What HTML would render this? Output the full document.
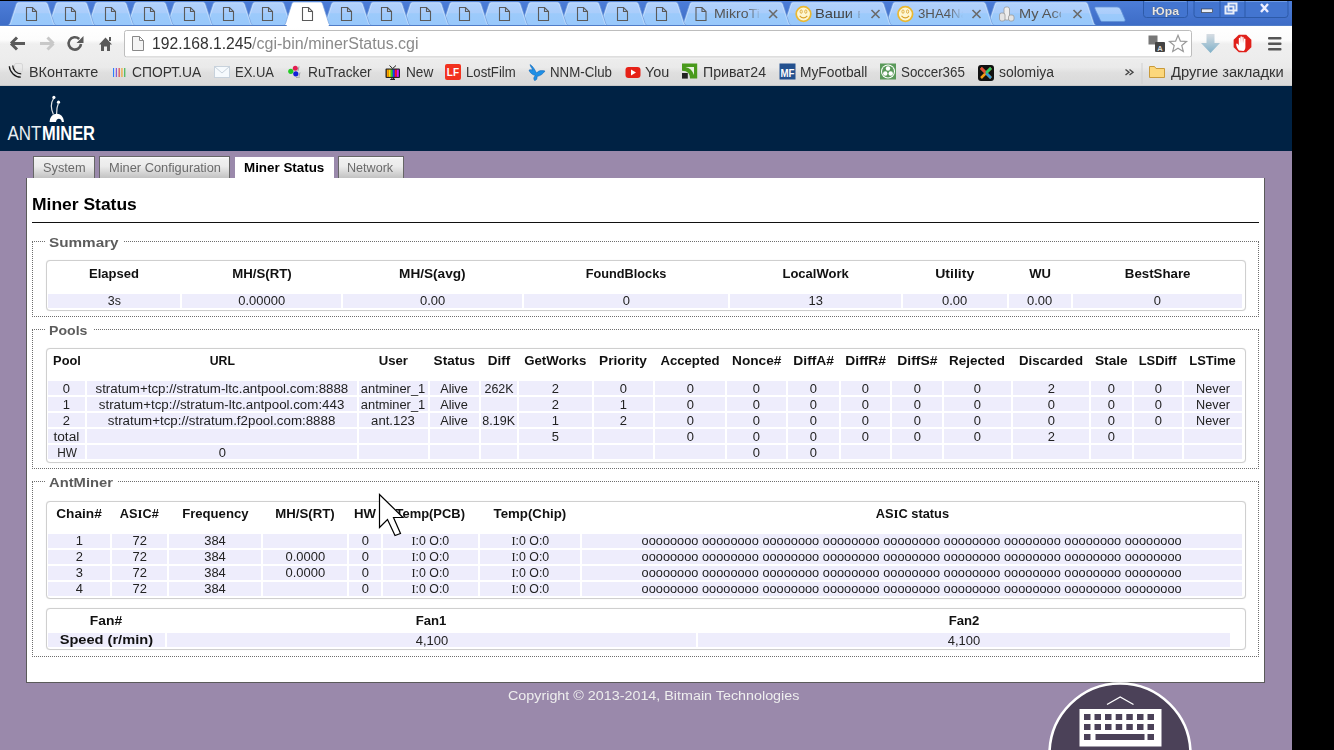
<!DOCTYPE html>
<html><head><meta charset="utf-8">
<style>
html,body{margin:0;padding:0;}
body{width:1334px;height:750px;overflow:hidden;background:#000;position:relative;font-family:"Liberation Sans",sans-serif;}
.a{position:absolute;}
.t{position:absolute;line-height:20px;white-space:pre;}
.t span{display:inline-block;}
.c{position:absolute;background:#eeedfc;}
.sI{font-family:"Liberation Serif";font-style:normal;}
.fs{position:absolute;border:1px dotted #6e6e6e;box-sizing:border-box;}
.lg{position:absolute;background:#fff;height:14px;}
.box{position:absolute;border:1px solid #cfcfcf;border-radius:4px;box-sizing:border-box;background:#fff;box-shadow:0 0 1px rgba(0,0,0,.15);}
.nav{position:absolute;top:156px;height:22px;box-sizing:border-box;border:1px solid #666;border-bottom:none;background:linear-gradient(#fff 0,#f0f0f0 2px,#ebebeb 45%,#d2d2d2 78%,#c2c2c2 100%);}
</style></head><body>
<svg class="a" style="left:0;top:0" width="1292" height="86" viewBox="0 0 1292 86">
<defs>
<linearGradient id="bg" x1="0" y1="0" x2="0" y2="1"><stop offset="0" stop-color="#4c7dd8"/><stop offset="1" stop-color="#3d6cc6"/></linearGradient>
<linearGradient id="tb" x1="0" y1="0" x2="0" y2="1"><stop offset="0" stop-color="#b2d2fc"/><stop offset=".45" stop-color="#aacdfb"/><stop offset=".5" stop-color="#9ccafb"/><stop offset="1" stop-color="#98c8fb"/></linearGradient>
<linearGradient id="tool" x1="0" y1="0" x2="0" y2="1"><stop offset="0" stop-color="#ffffff"/><stop offset=".233" stop-color="#fcfcfc"/><stop offset=".3" stop-color="#efefef"/><stop offset=".533" stop-color="#ededed"/><stop offset=".69" stop-color="#eaeaea"/><stop offset=".78" stop-color="#dfdfdf"/><stop offset=".983" stop-color="#d9d9d9"/></linearGradient>
<linearGradient id="dl" x1="0" y1="0" x2="0" y2="1"><stop offset="0" stop-color="#d7dde3"/><stop offset="1" stop-color="#7fb0c8"/></linearGradient>
<linearGradient id="fade" x1="0" y1="0" x2="1" y2="0"><stop offset="0" stop-color="#a8cbfa" stop-opacity="0"/><stop offset="1" stop-color="#a8cbfa" stop-opacity="1"/></linearGradient>
</defs>
<rect x="0" y="1" width="1292" height="25" fill="url(#bg)"/>
<rect x="0" y="26" width="1292" height="60" fill="url(#tool)"/>
<rect x="0" y="85" width="1292" height="1" fill="#c8c8c8"/>
<path d="M985.5 25.5 C987.3 25.5 988.0 24.5 988.5 23.0 L994.5 4.2 C995.0 2.6 995.8 2 997.5 2 L1085.0 2 C1086.7 2 1087.5 2.6 1088.0 4.2 L1094.0 23.0 C1094.5 24.5 1095.2 25.5 1097.0 25.5 Z" fill="url(#tb)" stroke="#6f9ad8" stroke-width="0.7"/>
<path d="M986.3 25.5 C988.1 25.5 988.8 24.5 989.3 23.0 L995.3 5.0 C995.8 3.4 996.6 2.8 998.3 2.8 L1084.2 2.8 C1085.9 2.8 1086.7 3.4 1087.2 5.0 L1093.2 23.0 C1093.7 24.5 1094.4 25.5 1096.2 25.5 Z" fill="none" stroke="#d6e6fd" stroke-width="0.7" opacity=".8"/>
<path d="M883.5 25.5 C885.3 25.5 886.0 24.5 886.5 23.0 L892.5 4.2 C893.0 2.6 893.8 2 895.5 2 L983.0 2 C984.7 2 985.5 2.6 986.0 4.2 L992.0 23.0 C992.5 24.5 993.2 25.5 995.0 25.5 Z" fill="url(#tb)" stroke="#6f9ad8" stroke-width="0.7"/>
<path d="M884.3 25.5 C886.1 25.5 886.8 24.5 887.3 23.0 L893.3 5.0 C893.8 3.4 894.6 2.8 896.3 2.8 L982.2 2.8 C983.9 2.8 984.7 3.4 985.2 5.0 L991.2 23.0 C991.7 24.5 992.4 25.5 994.2 25.5 Z" fill="none" stroke="#d6e6fd" stroke-width="0.7" opacity=".8"/>
<path d="M781.5 25.5 C783.3 25.5 784.0 24.5 784.5 23.0 L790.5 4.2 C791.0 2.6 791.8 2 793.5 2 L881.0 2 C882.7 2 883.5 2.6 884.0 4.2 L890.0 23.0 C890.5 24.5 891.2 25.5 893.0 25.5 Z" fill="url(#tb)" stroke="#6f9ad8" stroke-width="0.7"/>
<path d="M782.3 25.5 C784.1 25.5 784.8 24.5 785.3 23.0 L791.3 5.0 C791.8 3.4 792.6 2.8 794.3 2.8 L880.2 2.8 C881.9 2.8 882.7 3.4 883.2 5.0 L889.2 23.0 C889.7 24.5 890.4 25.5 892.2 25.5 Z" fill="none" stroke="#d6e6fd" stroke-width="0.7" opacity=".8"/>
<path d="M680.5 25.5 C682.3 25.5 683.0 24.5 683.5 23.0 L689.5 4.2 C690.0 2.6 690.8 2 692.5 2 L780.0 2 C781.7 2 782.5 2.6 783.0 4.2 L789.0 23.0 C789.5 24.5 790.2 25.5 792.0 25.5 Z" fill="url(#tb)" stroke="#6f9ad8" stroke-width="0.7"/>
<path d="M681.3 25.5 C683.1 25.5 683.8 24.5 684.3 23.0 L690.3 5.0 C690.8 3.4 691.6 2.8 693.3 2.8 L779.2 2.8 C780.9 2.8 781.7 3.4 782.2 5.0 L788.2 23.0 C788.7 24.5 789.4 25.5 791.2 25.5 Z" fill="none" stroke="#d6e6fd" stroke-width="0.7" opacity=".8"/>
<path d="M637.2 25.5 C639.0 25.5 639.7 24.5 640.2 23.0 L646.2 4.2 C646.7 2.6 647.5 2 649.2 2 L675.2 2 C676.9 2 677.7 2.6 678.2 4.2 L684.2 23.0 C684.7 24.5 685.4 25.5 687.2 25.5 Z" fill="url(#tb)" stroke="#6f9ad8" stroke-width="0.7"/>
<path d="M638.0 25.5 C639.8 25.5 640.5 24.5 641.0 23.0 L647.0 5.0 C647.5 3.4 648.3 2.8 650.0 2.8 L674.4 2.8 C676.1 2.8 676.9 3.4 677.4 5.0 L683.4 23.0 C683.9 24.5 684.6 25.5 686.4 25.5 Z" fill="none" stroke="#d6e6fd" stroke-width="0.7" opacity=".8"/>
<path d="M597.9 25.5 C599.6 25.5 600.4 24.5 600.9 23.0 L606.9 4.2 C607.4 2.6 608.1 2 609.9 2 L635.9 2 C637.6 2 638.4 2.6 638.9 4.2 L644.9 23.0 C645.4 24.5 646.1 25.5 647.9 25.5 Z" fill="url(#tb)" stroke="#6f9ad8" stroke-width="0.7"/>
<path d="M598.6 25.5 C600.4 25.5 601.1 24.5 601.6 23.0 L607.6 5.0 C608.1 3.4 608.9 2.8 610.6 2.8 L635.0 2.8 C636.8 2.8 637.5 3.4 638.0 5.0 L644.0 23.0 C644.5 24.5 645.2 25.5 647.0 25.5 Z" fill="none" stroke="#d6e6fd" stroke-width="0.7" opacity=".8"/>
<path d="M558.5 25.5 C560.3 25.5 561.0 24.5 561.5 23.0 L567.5 4.2 C568.0 2.6 568.8 2 570.5 2 L596.5 2 C598.2 2 599.0 2.6 599.5 4.2 L605.5 23.0 C606.0 24.5 606.7 25.5 608.5 25.5 Z" fill="url(#tb)" stroke="#6f9ad8" stroke-width="0.7"/>
<path d="M559.3 25.5 C561.1 25.5 561.8 24.5 562.3 23.0 L568.3 5.0 C568.8 3.4 569.6 2.8 571.3 2.8 L595.7 2.8 C597.4 2.8 598.2 3.4 598.7 5.0 L604.7 23.0 C605.2 24.5 605.9 25.5 607.7 25.5 Z" fill="none" stroke="#d6e6fd" stroke-width="0.7" opacity=".8"/>
<path d="M519.1 25.5 C520.9 25.5 521.6 24.5 522.1 23.0 L528.1 4.2 C528.6 2.6 529.4 2 531.1 2 L557.1 2 C558.8 2 559.6 2.6 560.1 4.2 L566.1 23.0 C566.6 24.5 567.3 25.5 569.1 25.5 Z" fill="url(#tb)" stroke="#6f9ad8" stroke-width="0.7"/>
<path d="M519.9 25.5 C521.7 25.5 522.4 24.5 522.9 23.0 L528.9 5.0 C529.4 3.4 530.2 2.8 531.9 2.8 L556.3 2.8 C558.0 2.8 558.8 3.4 559.3 5.0 L565.3 23.0 C565.8 24.5 566.5 25.5 568.3 25.5 Z" fill="none" stroke="#d6e6fd" stroke-width="0.7" opacity=".8"/>
<path d="M479.7 25.5 C481.5 25.5 482.2 24.5 482.7 23.0 L488.7 4.2 C489.2 2.6 490.0 2 491.7 2 L517.7 2 C519.4 2 520.2 2.6 520.7 4.2 L526.7 23.0 C527.2 24.5 527.9 25.5 529.7 25.5 Z" fill="url(#tb)" stroke="#6f9ad8" stroke-width="0.7"/>
<path d="M480.5 25.5 C482.3 25.5 483.0 24.5 483.5 23.0 L489.5 5.0 C490.0 3.4 490.8 2.8 492.5 2.8 L516.9 2.8 C518.6 2.8 519.4 3.4 519.9 5.0 L525.9 23.0 C526.4 24.5 527.1 25.5 528.9 25.5 Z" fill="none" stroke="#d6e6fd" stroke-width="0.7" opacity=".8"/>
<path d="M440.3 25.5 C442.1 25.5 442.8 24.5 443.3 23.0 L449.3 4.2 C449.8 2.6 450.6 2 452.3 2 L478.3 2 C480.0 2 480.8 2.6 481.3 4.2 L487.3 23.0 C487.8 24.5 488.5 25.5 490.3 25.5 Z" fill="url(#tb)" stroke="#6f9ad8" stroke-width="0.7"/>
<path d="M441.1 25.5 C442.9 25.5 443.6 24.5 444.1 23.0 L450.1 5.0 C450.6 3.4 451.4 2.8 453.1 2.8 L477.5 2.8 C479.2 2.8 480.0 3.4 480.5 5.0 L486.5 23.0 C487.0 24.5 487.7 25.5 489.5 25.5 Z" fill="none" stroke="#d6e6fd" stroke-width="0.7" opacity=".8"/>
<path d="M400.9 25.5 C402.7 25.5 403.4 24.5 403.9 23.0 L409.9 4.2 C410.4 2.6 411.2 2 412.9 2 L438.9 2 C440.6 2 441.4 2.6 441.9 4.2 L447.9 23.0 C448.4 24.5 449.1 25.5 450.9 25.5 Z" fill="url(#tb)" stroke="#6f9ad8" stroke-width="0.7"/>
<path d="M401.7 25.5 C403.5 25.5 404.2 24.5 404.7 23.0 L410.7 5.0 C411.2 3.4 412.0 2.8 413.7 2.8 L438.1 2.8 C439.8 2.8 440.6 3.4 441.1 5.0 L447.1 23.0 C447.6 24.5 448.3 25.5 450.1 25.5 Z" fill="none" stroke="#d6e6fd" stroke-width="0.7" opacity=".8"/>
<path d="M361.5 25.5 C363.3 25.5 364.0 24.5 364.5 23.0 L370.5 4.2 C371.0 2.6 371.8 2 373.5 2 L399.5 2 C401.2 2 402.0 2.6 402.5 4.2 L408.5 23.0 C409.0 24.5 409.7 25.5 411.5 25.5 Z" fill="url(#tb)" stroke="#6f9ad8" stroke-width="0.7"/>
<path d="M362.3 25.5 C364.1 25.5 364.8 24.5 365.3 23.0 L371.3 5.0 C371.8 3.4 372.6 2.8 374.3 2.8 L398.7 2.8 C400.4 2.8 401.2 3.4 401.7 5.0 L407.7 23.0 C408.2 24.5 408.9 25.5 410.7 25.5 Z" fill="none" stroke="#d6e6fd" stroke-width="0.7" opacity=".8"/>
<path d="M322.1 25.5 C323.9 25.5 324.6 24.5 325.1 23.0 L331.1 4.2 C331.6 2.6 332.4 2 334.1 2 L360.1 2 C361.8 2 362.6 2.6 363.1 4.2 L369.1 23.0 C369.6 24.5 370.3 25.5 372.1 25.5 Z" fill="url(#tb)" stroke="#6f9ad8" stroke-width="0.7"/>
<path d="M322.9 25.5 C324.7 25.5 325.4 24.5 325.9 23.0 L331.9 5.0 C332.4 3.4 333.2 2.8 334.9 2.8 L359.3 2.8 C361.0 2.8 361.8 3.4 362.3 5.0 L368.3 23.0 C368.8 24.5 369.5 25.5 371.3 25.5 Z" fill="none" stroke="#d6e6fd" stroke-width="0.7" opacity=".8"/>
<path d="M243.3 25.5 C245.1 25.5 245.8 24.5 246.3 23.0 L252.3 4.2 C252.8 2.6 253.6 2 255.3 2 L281.3 2 C283.0 2 283.8 2.6 284.3 4.2 L290.3 23.0 C290.8 24.5 291.5 25.5 293.3 25.5 Z" fill="url(#tb)" stroke="#6f9ad8" stroke-width="0.7"/>
<path d="M244.1 25.5 C245.9 25.5 246.6 24.5 247.1 23.0 L253.1 5.0 C253.6 3.4 254.4 2.8 256.1 2.8 L280.5 2.8 C282.2 2.8 283.0 3.4 283.5 5.0 L289.5 23.0 C290.0 24.5 290.7 25.5 292.5 25.5 Z" fill="none" stroke="#d6e6fd" stroke-width="0.7" opacity=".8"/>
<path d="M203.9 25.5 C205.8 25.5 206.4 24.5 206.9 23.0 L212.9 4.2 C213.4 2.6 214.2 2 215.9 2 L241.9 2 C243.6 2 244.4 2.6 244.9 4.2 L250.9 23.0 C251.4 24.5 252.1 25.5 253.9 25.5 Z" fill="url(#tb)" stroke="#6f9ad8" stroke-width="0.7"/>
<path d="M204.8 25.5 C206.6 25.5 207.2 24.5 207.8 23.0 L213.8 5.0 C214.2 3.4 215.1 2.8 216.8 2.8 L241.2 2.8 C242.8 2.8 243.7 3.4 244.2 5.0 L250.2 23.0 C250.7 24.5 251.3 25.5 253.2 25.5 Z" fill="none" stroke="#d6e6fd" stroke-width="0.7" opacity=".8"/>
<path d="M164.6 25.5 C166.4 25.5 167.1 24.5 167.6 23.0 L173.6 4.2 C174.1 2.6 174.9 2 176.6 2 L202.6 2 C204.3 2 205.1 2.6 205.6 4.2 L211.6 23.0 C212.1 24.5 212.8 25.5 214.6 25.5 Z" fill="url(#tb)" stroke="#6f9ad8" stroke-width="0.7"/>
<path d="M165.4 25.5 C167.2 25.5 167.9 24.5 168.4 23.0 L174.4 5.0 C174.9 3.4 175.7 2.8 177.4 2.8 L201.8 2.8 C203.5 2.8 204.3 3.4 204.8 5.0 L210.8 23.0 C211.3 24.5 212.0 25.5 213.8 25.5 Z" fill="none" stroke="#d6e6fd" stroke-width="0.7" opacity=".8"/>
<path d="M125.2 25.5 C127.0 25.5 127.7 24.5 128.2 23.0 L134.2 4.2 C134.7 2.6 135.5 2 137.2 2 L163.2 2 C164.9 2 165.7 2.6 166.2 4.2 L172.2 23.0 C172.7 24.5 173.4 25.5 175.2 25.5 Z" fill="url(#tb)" stroke="#6f9ad8" stroke-width="0.7"/>
<path d="M126.0 25.5 C127.8 25.5 128.5 24.5 129.0 23.0 L135.0 5.0 C135.5 3.4 136.3 2.8 138.0 2.8 L162.4 2.8 C164.1 2.8 164.9 3.4 165.4 5.0 L171.4 23.0 C171.9 24.5 172.6 25.5 174.4 25.5 Z" fill="none" stroke="#d6e6fd" stroke-width="0.7" opacity=".8"/>
<path d="M85.8 25.5 C87.6 25.5 88.3 24.5 88.8 23.0 L94.8 4.2 C95.3 2.6 96.1 2 97.8 2 L123.8 2 C125.5 2 126.3 2.6 126.8 4.2 L132.8 23.0 C133.3 24.5 134.0 25.5 135.8 25.5 Z" fill="url(#tb)" stroke="#6f9ad8" stroke-width="0.7"/>
<path d="M86.6 25.5 C88.4 25.5 89.1 24.5 89.6 23.0 L95.6 5.0 C96.1 3.4 96.9 2.8 98.6 2.8 L123.0 2.8 C124.7 2.8 125.5 3.4 126.0 5.0 L132.0 23.0 C132.5 24.5 133.2 25.5 135.0 25.5 Z" fill="none" stroke="#d6e6fd" stroke-width="0.7" opacity=".8"/>
<path d="M46.4 25.5 C48.2 25.5 48.9 24.5 49.4 23.0 L55.4 4.2 C55.9 2.6 56.7 2 58.4 2 L84.4 2 C86.1 2 86.9 2.6 87.4 4.2 L93.4 23.0 C93.9 24.5 94.6 25.5 96.4 25.5 Z" fill="url(#tb)" stroke="#6f9ad8" stroke-width="0.7"/>
<path d="M47.2 25.5 C49.0 25.5 49.7 24.5 50.2 23.0 L56.2 5.0 C56.7 3.4 57.5 2.8 59.2 2.8 L83.6 2.8 C85.3 2.8 86.1 3.4 86.6 5.0 L92.6 23.0 C93.1 24.5 93.8 25.5 95.6 25.5 Z" fill="none" stroke="#d6e6fd" stroke-width="0.7" opacity=".8"/>
<path d="M7.0 25.5 C8.8 25.5 9.5 24.5 10.0 23.0 L16.0 4.2 C16.5 2.6 17.3 2 19.0 2 L45.0 2 C46.7 2 47.5 2.6 48.0 4.2 L54.0 23.0 C54.5 24.5 55.2 25.5 57.0 25.5 Z" fill="url(#tb)" stroke="#6f9ad8" stroke-width="0.7"/>
<path d="M7.8 25.5 C9.6 25.5 10.3 24.5 10.8 23.0 L16.8 5.0 C17.3 3.4 18.1 2.8 19.8 2.8 L44.2 2.8 C45.9 2.8 46.7 3.4 47.2 5.0 L53.2 23.0 C53.7 24.5 54.4 25.5 56.2 25.5 Z" fill="none" stroke="#d6e6fd" stroke-width="0.7" opacity=".8"/>
<path d="M282.7 25.5 C284.5 25.5 285.2 24.5 285.7 23.0 L291.7 4.2 C292.2 2.6 293.0 2 294.7 2 L319.7 2 C321.4 2 322.2 2.6 322.7 4.2 L328.7 23.0 C329.2 24.5 329.9 25.5 331.7 25.5 Z" fill="#fff" stroke="#7aa3e0" stroke-width="0.7"/>
<rect x="0" y="25" width="1292" height="1" fill="#4f7cc8"/>
<rect x="286.7" y="25" width="42" height="1.5" fill="#fff"/>
<path d="M1096 7 L1117 7 C1119 7 1120 8 1121 10 L1125 19.5 C1125.5 21 1124.5 21.5 1123 21.5 L1103 21.5 C1101 21.5 1100.5 21 1100 19.5 L1095 9 C1094.5 7.5 1095 7 1096 7 Z" fill="url(#tb)" stroke="#5f8fd6" stroke-width="0.8"/>
<path d="M26.5 7.5 L32.5 7.5 L36.5 11.5 L36.5 20.5 L26.5 20.5 Z M32.5 7.5 L32.5 11.5 L36.5 11.5" fill="none" stroke="#5a5a5a" stroke-width="1.1"/>
<path d="M65.5 7.5 L71.5 7.5 L75.5 11.5 L75.5 20.5 L65.5 20.5 Z M71.5 7.5 L71.5 11.5 L75.5 11.5" fill="none" stroke="#5a5a5a" stroke-width="1.1"/>
<path d="M105.5 7.5 L111.5 7.5 L115.5 11.5 L115.5 20.5 L105.5 20.5 Z M111.5 7.5 L111.5 11.5 L115.5 11.5" fill="none" stroke="#5a5a5a" stroke-width="1.1"/>
<path d="M144.5 7.5 L150.5 7.5 L154.5 11.5 L154.5 20.5 L144.5 20.5 Z M150.5 7.5 L150.5 11.5 L154.5 11.5" fill="none" stroke="#5a5a5a" stroke-width="1.1"/>
<path d="M184.5 7.5 L190.5 7.5 L194.5 11.5 L194.5 20.5 L184.5 20.5 Z M190.5 7.5 L190.5 11.5 L194.5 11.5" fill="none" stroke="#5a5a5a" stroke-width="1.1"/>
<path d="M223.5 7.5 L229.5 7.5 L233.5 11.5 L233.5 20.5 L223.5 20.5 Z M229.5 7.5 L229.5 11.5 L233.5 11.5" fill="none" stroke="#5a5a5a" stroke-width="1.1"/>
<path d="M262.5 7.5 L268.5 7.5 L272.5 11.5 L272.5 20.5 L262.5 20.5 Z M268.5 7.5 L268.5 11.5 L272.5 11.5" fill="none" stroke="#5a5a5a" stroke-width="1.1"/>
<path d="M302.5 7.5 L308.5 7.5 L312.5 11.5 L312.5 20.5 L302.5 20.5 Z M308.5 7.5 L308.5 11.5 L312.5 11.5" fill="none" stroke="#5a5a5a" stroke-width="1.1"/>
<path d="M341.5 7.5 L347.5 7.5 L351.5 11.5 L351.5 20.5 L341.5 20.5 Z M347.5 7.5 L347.5 11.5 L351.5 11.5" fill="none" stroke="#5a5a5a" stroke-width="1.1"/>
<path d="M381.5 7.5 L387.5 7.5 L391.5 11.5 L391.5 20.5 L381.5 20.5 Z M387.5 7.5 L387.5 11.5 L391.5 11.5" fill="none" stroke="#5a5a5a" stroke-width="1.1"/>
<path d="M420.5 7.5 L426.5 7.5 L430.5 11.5 L430.5 20.5 L420.5 20.5 Z M426.5 7.5 L426.5 11.5 L430.5 11.5" fill="none" stroke="#5a5a5a" stroke-width="1.1"/>
<path d="M459.5 7.5 L465.5 7.5 L469.5 11.5 L469.5 20.5 L459.5 20.5 Z M465.5 7.5 L465.5 11.5 L469.5 11.5" fill="none" stroke="#5a5a5a" stroke-width="1.1"/>
<path d="M499.5 7.5 L505.5 7.5 L509.5 11.5 L509.5 20.5 L499.5 20.5 Z M505.5 7.5 L505.5 11.5 L509.5 11.5" fill="none" stroke="#5a5a5a" stroke-width="1.1"/>
<path d="M538.5 7.5 L544.5 7.5 L548.5 11.5 L548.5 20.5 L538.5 20.5 Z M544.5 7.5 L544.5 11.5 L548.5 11.5" fill="none" stroke="#5a5a5a" stroke-width="1.1"/>
<path d="M577.5 7.5 L583.5 7.5 L587.5 11.5 L587.5 20.5 L577.5 20.5 Z M583.5 7.5 L583.5 11.5 L587.5 11.5" fill="none" stroke="#5a5a5a" stroke-width="1.1"/>
<path d="M617.5 7.5 L623.5 7.5 L627.5 11.5 L627.5 20.5 L617.5 20.5 Z M623.5 7.5 L623.5 11.5 L627.5 11.5" fill="none" stroke="#5a5a5a" stroke-width="1.1"/>
<path d="M656.5 7.5 L662.5 7.5 L666.5 11.5 L666.5 20.5 L656.5 20.5 Z M662.5 7.5 L662.5 11.5 L666.5 11.5" fill="none" stroke="#5a5a5a" stroke-width="1.1"/>
<path d="M696.0 7.5 L702.0 7.5 L706.0 11.5 L706.0 20.5 L696.0 20.5 Z M702.0 7.5 L702.0 11.5 L706.0 11.5" fill="none" stroke="#5a5a5a" stroke-width="1.1"/>
<circle cx="803.5" cy="14" r="7.3" fill="#fdf6d2" stroke="#eab832" stroke-width="1.7"/>
<path d="M799.7 15.8 Q803.5 20 807.3 15.8" stroke="#d9a028" stroke-width="1.1" fill="none"/>
<ellipse cx="801.2" cy="11.6" rx="1.1" ry="1.7" fill="none" stroke="#d9a028" stroke-width=".8"/><ellipse cx="805.8" cy="11.6" rx="1.1" ry="1.7" fill="none" stroke="#d9a028" stroke-width=".8"/>
<circle cx="905.3" cy="14" r="7.3" fill="#fdf6d2" stroke="#eab832" stroke-width="1.7"/>
<path d="M901.5 15.8 Q905.3 20 909.0999999999999 15.8" stroke="#d9a028" stroke-width="1.1" fill="none"/>
<ellipse cx="903.0" cy="11.6" rx="1.1" ry="1.7" fill="none" stroke="#d9a028" stroke-width=".8"/><ellipse cx="907.5999999999999" cy="11.6" rx="1.1" ry="1.7" fill="none" stroke="#d9a028" stroke-width=".8"/>
<rect x="1004" y="7" width="5.5" height="13" rx="2" fill="#eee" stroke="#999" stroke-width=".8"/><rect x="999.5" y="13" width="5.5" height="8" rx="2" fill="#e4e4e4" stroke="#999" stroke-width=".8"/><rect x="1008.5" y="15" width="5.5" height="6" rx="2" fill="#e4e4e4" stroke="#999" stroke-width=".8"/>
<path d="M769.1 10 L777.1 18 M777.1 10 L769.1 18" stroke="#6a6a6a" stroke-width="1.6"/>
<path d="M871.5 10 L879.5 18 M879.5 10 L871.5 18" stroke="#6a6a6a" stroke-width="1.6"/>
<path d="M972.5 10 L980.5 18 M980.5 10 L972.5 18" stroke="#6a6a6a" stroke-width="1.6"/>
<path d="M1073.5 10 L1081.5 18 M1081.5 10 L1073.5 18" stroke="#6a6a6a" stroke-width="1.6"/>
<rect x="1143.5" y="-2" width="44" height="19.5" rx="3" fill="#4375d0" stroke="#2d5aa8" stroke-width="1"/>
<rect x="1194" y="-2" width="94" height="19.5" rx="3" fill="#4375d0" stroke="#2d5aa8" stroke-width="1"/>
<rect x="1144.5" y="1" width="42" height="1" fill="#6e9be6"/><rect x="1195" y="1" width="92" height="1" fill="#6e9be6"/>
<rect x="1219.5" y="1" width="1" height="16" fill="#2d5aa8"/><rect x="1244.5" y="1" width="1" height="16" fill="#2d5aa8"/>
<rect x="1201.5" y="9" width="11" height="3.5" fill="#e8eef8" stroke="#333" stroke-width=".6"/>
<rect x="1225.5" y="6.5" width="8" height="7" fill="none" stroke="#e8eef8" stroke-width="2"/><rect x="1228.5" y="3.5" width="8" height="7" fill="none" stroke="#e8eef8" stroke-width="2"/>
<path d="M1261 4 L1268 12 M1268 4 L1261 12" stroke="#eef" stroke-width="2.4"/>
<path d="M11 43.5 L17 37.5 M11 43.5 L17 49.5 M11.5 43.5 L25 43.5" stroke="#5a5a5a" stroke-width="3" fill="none" stroke-linecap="butt"/>
<path d="M53.5 43.5 L47.5 37.5 M53.5 43.5 L47.5 49.5 M53 43.5 L40 43.5" stroke="#c8c8c8" stroke-width="3" fill="none"/>
<path d="M81 44 A6.2 6.2 0 1 1 79.2 39" stroke="#5a5a5a" stroke-width="2.6" fill="none"/><path d="M83.5 36 L83.5 43 L76.5 43 Z" fill="#5a5a5a"/>
<path d="M99 44.5 L105.5 37.5 L112 44.5 L110 44.5 L110 51 L107 51 L107 46.5 L104 46.5 L104 51 L101 51 L101 44.5 Z" fill="#5a5a5a"/><rect x="109" y="37" width="2" height="4" fill="#5a5a5a"/>
<rect x="124.5" y="30.5" width="1067" height="26.5" rx="2" fill="#fff" stroke="#bdbdbd" stroke-width="1"/><rect x="125" y="57.5" width="1066" height="1" fill="#f6f6f6"/>
<path d="M132.5 36.5 L139.5 36.5 L143.5 40.5 L143.5 50.5 L132.5 50.5 Z M139.5 36.5 L139.5 40.5 L143.5 40.5" fill="#f4f4f4" stroke="#888" stroke-width="1"/>
<rect x="1148.5" y="35.5" width="9" height="9" fill="#777"/><rect x="1155" y="42" width="10" height="10" rx="1" fill="#444"/><text x="1157.3" y="50.5" font-family="Liberation Sans" font-size="7.5" fill="#ddd" font-weight="700">A</text>
<polygon points="1178.00,35.30 1180.35,41.06 1186.56,41.52 1181.80,45.54 1183.29,51.58 1178.00,48.30 1172.71,51.58 1174.20,45.54 1169.44,41.52 1175.65,41.06" fill="#fff" stroke="#999" stroke-width="1.2"/>
<path d="M1206.5 34 L1214.5 34 L1214.5 43 L1220 43 L1210.5 53 L1201 43 L1206.5 43 Z" fill="url(#dl)"/>
<polygon points="1251.37,47.17 1246.17,52.37 1238.83,52.37 1233.63,47.17 1233.63,39.83 1238.83,34.63 1246.17,34.63 1251.37,39.83" fill="#e0201a"/>
<path d="M1239 50.5 C1237 48 1236 45.5 1236.2 44 C1236.5 43 1237.5 43.3 1238 44.3 L1238.8 45.6 L1238.8 38.5 C1238.8 37.6 1240.2 37.6 1240.2 38.5 L1240.3 43 L1240.4 37 C1240.4 36 1241.9 36 1241.9 37 L1242 43 L1242.2 37.5 C1242.2 36.6 1243.6 36.6 1243.6 37.5 L1243.7 43.3 L1244 39 C1244 38.2 1245.4 38.2 1245.4 39 L1245.4 47 C1245.4 49 1244.5 50.5 1243.5 51 Z" fill="#fff"/>
<rect x="1268" y="37" width="13.5" height="2.6" rx="1" fill="#555"/>
<rect x="1268" y="42.5" width="13.5" height="2.6" rx="1" fill="#555"/>
<rect x="1268" y="48" width="13.5" height="2.6" rx="1" fill="#555"/>
<rect x="14.5" y="63.5" width="8" height="8.5" rx="1.5" fill="none" stroke="#d2d2d2" stroke-width=".8"/><path d="M9.3 66.3 A12 12 0 0 0 20.8 77.2 M12.7 65.5 A8.7 8.7 0 0 0 21.2 73.9" stroke="#1a1a1a" stroke-width="1.3" fill="none"/>
<rect x="113.0" y="68" width="1.1" height="9" fill="#2a7fff"/>
<rect x="115.8" y="68" width="1.1" height="9" fill="#7d4bd6"/>
<rect x="118.6" y="68" width="1.1" height="9" fill="#e23a3a"/>
<rect x="121.4" y="68" width="1.1" height="9" fill="#f0a020"/>
<rect x="124.2" y="68" width="1.1" height="9" fill="#36b34a"/>
<rect x="214.5" y="66.5" width="15" height="11" fill="#f6fafd" stroke="#c8d2dc" stroke-width="1"/><path d="M214.5 66.5 L222 73 L229.5 66.5" stroke="#c8d2dc" fill="none"/>
<circle cx="290.8" cy="71.3" r="2.6" fill="#2c2"/><circle cx="295.3" cy="68.2" r="2.5" fill="#e12050"/><circle cx="295.8" cy="73.8" r="2.6" fill="#1020d8"/><path d="M299 66.5 L298 71 M300 72.5 L299 76 M296 77.5 L300 77" stroke="#888" stroke-width=".7"/>
<rect x="385.5" y="68.5" width="14.5" height="9.5" rx="1" fill="#222"/><rect x="386.8" y="69.6" width="2" height="7.3" fill="#f90"/><rect x="388.8" y="69.6" width="2" height="7.3" fill="#fd0"/><rect x="390.8" y="69.6" width="2" height="7.3" fill="#3c3"/><rect x="392.8" y="69.6" width="2" height="7.3" fill="#23f"/><rect x="394.8" y="69.6" width="2" height="7.3" fill="#f12"/><rect x="396.8" y="69.6" width="2" height="7.3" fill="#c2f"/><path d="M389.5 65.5 L392.7 68.5 L396 65.5 M392.7 78 L390.5 79.5 L395 79.5 Z" stroke="#222" fill="none"/>
<rect x="445" y="64" width="16" height="16" rx="2" fill="#f2321f"/><text x="446.8" y="76.3" font-family="Liberation Sans" font-size="10" font-weight="700" fill="#fff">LF</text>
<path d="M530 64.5 C533 66 535 70 536.5 73 C539 70 542 70.5 545 71 C543 74 540 76 537 76.5 C537.5 78.5 536.5 80.5 534.5 80.5 C533 78.5 534 76.5 535.5 75.5 C532.5 75 529.5 72.5 529 70 C531 69.5 532 69.5 533 70 C531.5 68 530.5 66.5 530 64.5 Z" fill="#1d8fe6" stroke="#0b5fb0" stroke-width=".5"/>
<rect x="625.5" y="67" width="15" height="11" rx="3" fill="#e62117"/><path d="M631 69.5 L636 72.5 L631 75.5 Z" fill="#fff"/>
<path d="M682 63.5 L697.2 63.5 L697.2 78.6 L690 78.6 C690 73.5 687.5 71 682 70.8 Z" fill="#4a9a1c"/><path d="M685.5 67 L694 67 L694 75 C692.5 70.5 689.5 67.8 685.5 67 Z" fill="#e8f0e0"/><rect x="682" y="73" width="5.8" height="5.6" fill="#222"/>
<rect x="779.5" y="63.5" width="16" height="16" fill="#24518f"/><text x="780.5" y="76.5" font-family="Liberation Sans" font-size="11" font-weight="700" fill="#fff" textLength="14" lengthAdjust="spacingAndGlyphs">MF</text>
<rect x="880" y="63.5" width="16" height="16" fill="#5a9a5a"/><circle cx="888" cy="71.5" r="7" fill="#fff"/><circle cx="888" cy="71.5" r="6" fill="#5a9a5a"/><circle cx="888" cy="68.5" r="2.2" fill="#fff"/><circle cx="885.3" cy="73.5" r="2.2" fill="#fff"/><circle cx="890.7" cy="73.5" r="2.2" fill="#fff"/>
<rect x="978" y="65" width="16" height="16" rx="3" fill="#111"/><path d="M981 68 L991 78 M991 68 L981 78" stroke="#f39c12" stroke-width="2.5"/><path d="M981 68 L986 73" stroke="#e74c3c" stroke-width="2.5"/><path d="M991 78 L986 73" stroke="#3498db" stroke-width="2.5"/><path d="M991 68 L986 73" stroke="#2ecc71" stroke-width="2.5"/>
<path d="M1125.5 69.5 L1129 72.3 L1125.5 75 M1129.5 69.5 L1133 72.3 L1129.5 75" stroke="#444" stroke-width="1.4" fill="none"/>
<rect x="1141.5" y="63" width="1" height="21" fill="#d0d0d0"/>
<path d="M1149.5 66.5 L1154.5 66.5 L1156 68.5 L1164.5 68.5 L1164.5 77.5 L1149.5 77.5 Z" fill="#fcd77b" stroke="#c99a3a" stroke-width="1"/>
<rect x="0" y="0" width="1292" height="1" fill="#000"/>
</svg>
<div class="a" style="left:0;top:86px;width:1292px;height:664px;background:#9a89ab"></div>
<div class="a" style="left:0;top:86px;width:1292px;height:65px;background:#002244"></div>
<!-- logo -->
<svg class="a" style="left:0;top:86px" width="120" height="65" viewBox="0 86 120 65">
 <path d="M53.6 98.5 C51.2 102 50.6 108 53.4 114.5" stroke="#dfe3e6" stroke-width="1.2" fill="none"/>
 <path d="M58.3 103.5 C57 106.5 56.5 110 56.6 114" stroke="#dfe3e6" stroke-width="1.2" fill="none"/>
 <circle cx="53.9" cy="97.4" r="1.6" fill="#fff"/>
 <circle cx="58.5" cy="102.2" r="1.6" fill="#fff"/>
 <path d="M49.6 122 C50 116.5 53 113.8 56.8 113.8 C60.6 113.8 63.5 116.5 64 122 L61.8 122 C61.5 119.8 60.4 118.8 58.9 118.8 C57.4 118.8 56.3 119.8 56 122 Z" fill="#fff"/>
 <text x="7.5" y="140" font-family="Liberation Sans" font-size="19.6" fill="#e8eef2" textLength="34" lengthAdjust="spacingAndGlyphs" font-weight="400">ANT</text>
 <text x="42" y="140" font-family="Liberation Sans" font-size="19.6" fill="#fff" textLength="53" lengthAdjust="spacingAndGlyphs" font-weight="700">MINER</text>
</svg>
<!-- nav tabs -->
<div class="nav" style="left:33px;width:62px"></div>
<div class="nav" style="left:99px;width:131px"></div>
<div class="nav" style="left:337.5px;width:66px"></div>
<div class="a" style="left:234.5px;top:157px;width:99px;height:23px;background:#fff"></div>
<!-- panel -->
<div class="a" style="left:26px;top:178px;width:1237px;height:504px;background:#fff;border-left:1px solid #5a5a5a;border-right:1px solid #5a5a5a;border-bottom:1px solid #5a5a5a;box-sizing:content-box"></div>
<div class="a" style="left:234.5px;top:170px;width:99px;height:10px;background:#fff"></div>
<div class="a" style="left:32px;top:221.5px;width:1227px;height:1.6px;background:#111"></div>
<!-- fieldsets -->
<div class="fs" style="left:32px;top:241px;width:1227px;height:76px"></div>
<div class="lg" style="left:45.5px;top:234px;width:78px"></div>
<div class="fs" style="left:32px;top:329px;width:1227px;height:140px"></div>
<div class="lg" style="left:45.5px;top:322px;width:47px"></div>
<div class="fs" style="left:32px;top:481px;width:1227px;height:176px"></div>
<div class="lg" style="left:45.5px;top:474px;width:72px"></div>
<!-- boxes -->
<div class="box" style="left:45.5px;top:260px;width:1200px;height:50.5px"></div>
<div class="box" style="left:45.5px;top:348px;width:1200px;height:114.5px"></div>
<div class="box" style="left:45.5px;top:500.5px;width:1200px;height:98.5px"></div>
<div class="box" style="left:45.5px;top:607.5px;width:1200px;height:42px"></div>
<div class="c" style="left:48px;top:293.5px;width:132px;height:14.0px"></div>
<div class="c" style="left:182px;top:293.5px;width:159px;height:14.0px"></div>
<div class="c" style="left:343px;top:293.5px;width:179px;height:14.0px"></div>
<div class="c" style="left:524px;top:293.5px;width:204px;height:14.0px"></div>
<div class="c" style="left:730px;top:293.5px;width:171px;height:14.0px"></div>
<div class="c" style="left:903px;top:293.5px;width:104px;height:14.0px"></div>
<div class="c" style="left:1009px;top:293.5px;width:62px;height:14.0px"></div>
<div class="c" style="left:1073px;top:293.5px;width:169px;height:14.0px"></div>
<div class="c" style="left:48px;top:381px;width:37px;height:14px"></div>
<div class="c" style="left:87px;top:381px;width:270px;height:14px"></div>
<div class="c" style="left:359px;top:381px;width:69px;height:14px"></div>
<div class="c" style="left:430px;top:381px;width:49px;height:14px"></div>
<div class="c" style="left:481px;top:381px;width:36px;height:14px"></div>
<div class="c" style="left:519px;top:381px;width:73px;height:14px"></div>
<div class="c" style="left:594px;top:381px;width:59px;height:14px"></div>
<div class="c" style="left:655px;top:381px;width:70px;height:14px"></div>
<div class="c" style="left:727px;top:381px;width:59px;height:14px"></div>
<div class="c" style="left:788px;top:381px;width:51px;height:14px"></div>
<div class="c" style="left:841px;top:381px;width:49px;height:14px"></div>
<div class="c" style="left:892px;top:381px;width:50px;height:14px"></div>
<div class="c" style="left:944px;top:381px;width:67px;height:14px"></div>
<div class="c" style="left:1013px;top:381px;width:76px;height:14px"></div>
<div class="c" style="left:1091px;top:381px;width:41px;height:14px"></div>
<div class="c" style="left:1134px;top:381px;width:48px;height:14px"></div>
<div class="c" style="left:1184px;top:381px;width:58px;height:14px"></div>
<div class="c" style="left:48px;top:397px;width:37px;height:14px"></div>
<div class="c" style="left:87px;top:397px;width:270px;height:14px"></div>
<div class="c" style="left:359px;top:397px;width:69px;height:14px"></div>
<div class="c" style="left:430px;top:397px;width:49px;height:14px"></div>
<div class="c" style="left:481px;top:397px;width:36px;height:14px"></div>
<div class="c" style="left:519px;top:397px;width:73px;height:14px"></div>
<div class="c" style="left:594px;top:397px;width:59px;height:14px"></div>
<div class="c" style="left:655px;top:397px;width:70px;height:14px"></div>
<div class="c" style="left:727px;top:397px;width:59px;height:14px"></div>
<div class="c" style="left:788px;top:397px;width:51px;height:14px"></div>
<div class="c" style="left:841px;top:397px;width:49px;height:14px"></div>
<div class="c" style="left:892px;top:397px;width:50px;height:14px"></div>
<div class="c" style="left:944px;top:397px;width:67px;height:14px"></div>
<div class="c" style="left:1013px;top:397px;width:76px;height:14px"></div>
<div class="c" style="left:1091px;top:397px;width:41px;height:14px"></div>
<div class="c" style="left:1134px;top:397px;width:48px;height:14px"></div>
<div class="c" style="left:1184px;top:397px;width:58px;height:14px"></div>
<div class="c" style="left:48px;top:413px;width:37px;height:14px"></div>
<div class="c" style="left:87px;top:413px;width:270px;height:14px"></div>
<div class="c" style="left:359px;top:413px;width:69px;height:14px"></div>
<div class="c" style="left:430px;top:413px;width:49px;height:14px"></div>
<div class="c" style="left:481px;top:413px;width:36px;height:14px"></div>
<div class="c" style="left:519px;top:413px;width:73px;height:14px"></div>
<div class="c" style="left:594px;top:413px;width:59px;height:14px"></div>
<div class="c" style="left:655px;top:413px;width:70px;height:14px"></div>
<div class="c" style="left:727px;top:413px;width:59px;height:14px"></div>
<div class="c" style="left:788px;top:413px;width:51px;height:14px"></div>
<div class="c" style="left:841px;top:413px;width:49px;height:14px"></div>
<div class="c" style="left:892px;top:413px;width:50px;height:14px"></div>
<div class="c" style="left:944px;top:413px;width:67px;height:14px"></div>
<div class="c" style="left:1013px;top:413px;width:76px;height:14px"></div>
<div class="c" style="left:1091px;top:413px;width:41px;height:14px"></div>
<div class="c" style="left:1134px;top:413px;width:48px;height:14px"></div>
<div class="c" style="left:1184px;top:413px;width:58px;height:14px"></div>
<div class="c" style="left:48px;top:429px;width:37px;height:14px"></div>
<div class="c" style="left:87px;top:429px;width:270px;height:14px"></div>
<div class="c" style="left:359px;top:429px;width:69px;height:14px"></div>
<div class="c" style="left:430px;top:429px;width:49px;height:14px"></div>
<div class="c" style="left:481px;top:429px;width:36px;height:14px"></div>
<div class="c" style="left:519px;top:429px;width:73px;height:14px"></div>
<div class="c" style="left:594px;top:429px;width:59px;height:14px"></div>
<div class="c" style="left:655px;top:429px;width:70px;height:14px"></div>
<div class="c" style="left:727px;top:429px;width:59px;height:14px"></div>
<div class="c" style="left:788px;top:429px;width:51px;height:14px"></div>
<div class="c" style="left:841px;top:429px;width:49px;height:14px"></div>
<div class="c" style="left:892px;top:429px;width:50px;height:14px"></div>
<div class="c" style="left:944px;top:429px;width:67px;height:14px"></div>
<div class="c" style="left:1013px;top:429px;width:76px;height:14px"></div>
<div class="c" style="left:1091px;top:429px;width:41px;height:14px"></div>
<div class="c" style="left:1134px;top:429px;width:48px;height:14px"></div>
<div class="c" style="left:1184px;top:429px;width:58px;height:14px"></div>
<div class="c" style="left:48px;top:445px;width:37px;height:14px"></div>
<div class="c" style="left:87px;top:445px;width:270px;height:14px"></div>
<div class="c" style="left:359px;top:445px;width:69px;height:14px"></div>
<div class="c" style="left:430px;top:445px;width:49px;height:14px"></div>
<div class="c" style="left:481px;top:445px;width:36px;height:14px"></div>
<div class="c" style="left:519px;top:445px;width:73px;height:14px"></div>
<div class="c" style="left:594px;top:445px;width:59px;height:14px"></div>
<div class="c" style="left:655px;top:445px;width:70px;height:14px"></div>
<div class="c" style="left:727px;top:445px;width:59px;height:14px"></div>
<div class="c" style="left:788px;top:445px;width:51px;height:14px"></div>
<div class="c" style="left:841px;top:445px;width:49px;height:14px"></div>
<div class="c" style="left:892px;top:445px;width:50px;height:14px"></div>
<div class="c" style="left:944px;top:445px;width:67px;height:14px"></div>
<div class="c" style="left:1013px;top:445px;width:76px;height:14px"></div>
<div class="c" style="left:1091px;top:445px;width:41px;height:14px"></div>
<div class="c" style="left:1134px;top:445px;width:48px;height:14px"></div>
<div class="c" style="left:1184px;top:445px;width:58px;height:14px"></div>
<div class="c" style="left:48px;top:534px;width:62px;height:14px"></div>
<div class="c" style="left:112px;top:534px;width:55px;height:14px"></div>
<div class="c" style="left:169px;top:534px;width:92px;height:14px"></div>
<div class="c" style="left:263px;top:534px;width:84px;height:14px"></div>
<div class="c" style="left:349px;top:534px;width:32px;height:14px"></div>
<div class="c" style="left:383px;top:534px;width:95px;height:14px"></div>
<div class="c" style="left:480px;top:534px;width:100px;height:14px"></div>
<div class="c" style="left:582px;top:534px;width:660px;height:14px"></div>
<div class="c" style="left:48px;top:550px;width:62px;height:14px"></div>
<div class="c" style="left:112px;top:550px;width:55px;height:14px"></div>
<div class="c" style="left:169px;top:550px;width:92px;height:14px"></div>
<div class="c" style="left:263px;top:550px;width:84px;height:14px"></div>
<div class="c" style="left:349px;top:550px;width:32px;height:14px"></div>
<div class="c" style="left:383px;top:550px;width:95px;height:14px"></div>
<div class="c" style="left:480px;top:550px;width:100px;height:14px"></div>
<div class="c" style="left:582px;top:550px;width:660px;height:14px"></div>
<div class="c" style="left:48px;top:566px;width:62px;height:14px"></div>
<div class="c" style="left:112px;top:566px;width:55px;height:14px"></div>
<div class="c" style="left:169px;top:566px;width:92px;height:14px"></div>
<div class="c" style="left:263px;top:566px;width:84px;height:14px"></div>
<div class="c" style="left:349px;top:566px;width:32px;height:14px"></div>
<div class="c" style="left:383px;top:566px;width:95px;height:14px"></div>
<div class="c" style="left:480px;top:566px;width:100px;height:14px"></div>
<div class="c" style="left:582px;top:566px;width:660px;height:14px"></div>
<div class="c" style="left:48px;top:582px;width:62px;height:14px"></div>
<div class="c" style="left:112px;top:582px;width:55px;height:14px"></div>
<div class="c" style="left:169px;top:582px;width:92px;height:14px"></div>
<div class="c" style="left:263px;top:582px;width:84px;height:14px"></div>
<div class="c" style="left:349px;top:582px;width:32px;height:14px"></div>
<div class="c" style="left:383px;top:582px;width:95px;height:14px"></div>
<div class="c" style="left:480px;top:582px;width:100px;height:14px"></div>
<div class="c" style="left:582px;top:582px;width:660px;height:14px"></div>
<div class="c" style="left:48px;top:632.6px;width:117px;height:14.0px"></div>
<div class="c" style="left:167px;top:632.6px;width:529px;height:14.0px"></div>
<div class="c" style="left:698px;top:632.6px;width:532px;height:14.0px"></div>
<div class="t" style="left:-186.00px;width:600px;text-align:center;top:263.54px;font-size:12px;color:#111;font-weight:700;"><span style="transform:scaleX(1.0845)">Elapsed</span></div>
<div class="t" style="left:-38.50px;width:600px;text-align:center;top:263.54px;font-size:12px;color:#111;font-weight:700;"><span style="transform:scaleX(1.0994)">MH/S(RT)</span></div>
<div class="t" style="left:132.50px;width:600px;text-align:center;top:263.54px;font-size:12px;color:#111;font-weight:700;"><span style="transform:scaleX(1.1345)">MH/S(avg)</span></div>
<div class="t" style="left:326.00px;width:600px;text-align:center;top:263.54px;font-size:12px;color:#111;font-weight:700;"><span style="transform:scaleX(1.0605)">FoundBlocks</span></div>
<div class="t" style="left:515.50px;width:600px;text-align:center;top:263.54px;font-size:12px;color:#111;font-weight:700;"><span style="transform:scaleX(1.0840)">LocalWork</span></div>
<div class="t" style="left:655.00px;width:600px;text-align:center;top:263.54px;font-size:12px;color:#111;font-weight:700;"><span style="transform:scaleX(1.1719)">Utility</span></div>
<div class="t" style="left:740.00px;width:600px;text-align:center;top:263.54px;font-size:12px;color:#111;font-weight:700;"><span style="transform:scaleX(1.0855)">WU</span></div>
<div class="t" style="left:857.50px;width:600px;text-align:center;top:263.54px;font-size:12px;color:#111;font-weight:700;"><span style="transform:scaleX(1.1054)">BestShare</span></div>
<div class="t" style="left:-186.00px;width:600px;text-align:center;top:290.84px;font-size:12px;color:#222;"><span style="transform:scaleX(1.0338)">3s</span></div>
<div class="t" style="left:-38.50px;width:600px;text-align:center;top:290.84px;font-size:12px;color:#222;"><span style="transform:scaleX(1.0801)">0.00000</span></div>
<div class="t" style="left:132.50px;width:600px;text-align:center;top:290.84px;font-size:12px;color:#222;"><span style="transform:scaleX(1.0803)">0.00</span></div>
<div class="t" style="left:326.00px;width:600px;text-align:center;top:290.84px;font-size:12px;color:#222;"><span style="transform:scaleX(1.0781)">0</span></div>
<div class="t" style="left:515.50px;width:600px;text-align:center;top:290.84px;font-size:12px;color:#222;"><span style="transform:scaleX(1.0794)">13</span></div>
<div class="t" style="left:655.00px;width:600px;text-align:center;top:290.84px;font-size:12px;color:#222;"><span style="transform:scaleX(1.0803)">0.00</span></div>
<div class="t" style="left:740.00px;width:600px;text-align:center;top:290.84px;font-size:12px;color:#222;"><span style="transform:scaleX(1.0803)">0.00</span></div>
<div class="t" style="left:857.50px;width:600px;text-align:center;top:290.84px;font-size:12px;color:#222;"><span style="transform:scaleX(1.0781)">0</span></div>
<div class="t" style="left:-233.50px;width:600px;text-align:center;top:351.14px;font-size:12px;color:#111;font-weight:700;"><span style="transform:scaleX(1.0678)">Pool</span></div>
<div class="t" style="left:-78.00px;width:600px;text-align:center;top:351.14px;font-size:12px;color:#111;font-weight:700;"><span style="transform:scaleX(1.0196)">URL</span></div>
<div class="t" style="left:93.50px;width:600px;text-align:center;top:351.14px;font-size:12px;color:#111;font-weight:700;"><span style="transform:scaleX(1.0951)">User</span></div>
<div class="t" style="left:154.50px;width:600px;text-align:center;top:351.14px;font-size:12px;color:#111;font-weight:700;"><span style="transform:scaleX(1.1300)">Status</span></div>
<div class="t" style="left:199.00px;width:600px;text-align:center;top:351.14px;font-size:12px;color:#111;font-weight:700;"><span style="transform:scaleX(1.1233)">Diff</span></div>
<div class="t" style="left:255.50px;width:600px;text-align:center;top:351.14px;font-size:12px;color:#111;font-weight:700;"><span style="transform:scaleX(1.1007)">GetWorks</span></div>
<div class="t" style="left:323.50px;width:600px;text-align:center;top:351.14px;font-size:12px;color:#111;font-weight:700;"><span style="transform:scaleX(1.1388)">Priority</span></div>
<div class="t" style="left:390.00px;width:600px;text-align:center;top:351.14px;font-size:12px;color:#111;font-weight:700;"><span style="transform:scaleX(1.0958)">Accepted</span></div>
<div class="t" style="left:456.50px;width:600px;text-align:center;top:351.14px;font-size:12px;color:#111;font-weight:700;"><span style="transform:scaleX(1.1354)">Nonce#</span></div>
<div class="t" style="left:513.50px;width:600px;text-align:center;top:351.14px;font-size:12px;color:#111;font-weight:700;"><span style="transform:scaleX(1.1525)">DiffA#</span></div>
<div class="t" style="left:565.50px;width:600px;text-align:center;top:351.14px;font-size:12px;color:#111;font-weight:700;"><span style="transform:scaleX(1.1511)">DiffR#</span></div>
<div class="t" style="left:617.00px;width:600px;text-align:center;top:351.14px;font-size:12px;color:#111;font-weight:700;"><span style="transform:scaleX(1.1572)">DiffS#</span></div>
<div class="t" style="left:677.50px;width:600px;text-align:center;top:351.14px;font-size:12px;color:#111;font-weight:700;"><span style="transform:scaleX(1.1175)">Rejected</span></div>
<div class="t" style="left:751.00px;width:600px;text-align:center;top:351.14px;font-size:12px;color:#111;font-weight:700;"><span style="transform:scaleX(1.1010)">Discarded</span></div>
<div class="t" style="left:811.50px;width:600px;text-align:center;top:351.14px;font-size:12px;color:#111;font-weight:700;"><span style="transform:scaleX(1.1433)">Stale</span></div>
<div class="t" style="left:858.00px;width:600px;text-align:center;top:351.14px;font-size:12px;color:#111;font-weight:700;"><span style="transform:scaleX(1.0715)">LSDiff</span></div>
<div class="t" style="left:913.00px;width:600px;text-align:center;top:351.14px;font-size:12px;color:#111;font-weight:700;"><span style="transform:scaleX(1.0781)">LSTime</span></div>
<div class="t" style="left:-233.50px;width:600px;text-align:center;top:379.04px;font-size:12px;color:#222;"><span style="transform:scaleX(1.0781)">0</span></div>
<div class="t" style="left:-78.00px;width:600px;text-align:center;top:379.04px;font-size:12px;color:#222;"><span style="transform:scaleX(1.1097)">stratum+tcp://stratum-ltc.antpool.com:8888</span></div>
<div class="t" style="left:93.50px;width:600px;text-align:center;top:379.04px;font-size:12px;color:#222;"><span style="transform:scaleX(1.0732)">antminer_1</span></div>
<div class="t" style="left:154.50px;width:600px;text-align:center;top:379.04px;font-size:12px;color:#222;"><span style="transform:scaleX(1.0659)">Alive</span></div>
<div class="t" style="left:199.00px;width:600px;text-align:center;top:379.04px;font-size:12px;color:#222;"><span style="transform:scaleX(1.0369)">262K</span></div>
<div class="t" style="left:255.50px;width:600px;text-align:center;top:379.04px;font-size:12px;color:#222;"><span style="transform:scaleX(1.0781)">2</span></div>
<div class="t" style="left:323.50px;width:600px;text-align:center;top:379.04px;font-size:12px;color:#222;"><span style="transform:scaleX(1.0781)">0</span></div>
<div class="t" style="left:390.00px;width:600px;text-align:center;top:379.04px;font-size:12px;color:#222;"><span style="transform:scaleX(1.0781)">0</span></div>
<div class="t" style="left:456.50px;width:600px;text-align:center;top:379.04px;font-size:12px;color:#222;"><span style="transform:scaleX(1.0781)">0</span></div>
<div class="t" style="left:513.50px;width:600px;text-align:center;top:379.04px;font-size:12px;color:#222;"><span style="transform:scaleX(1.0781)">0</span></div>
<div class="t" style="left:565.50px;width:600px;text-align:center;top:379.04px;font-size:12px;color:#222;"><span style="transform:scaleX(1.0781)">0</span></div>
<div class="t" style="left:617.00px;width:600px;text-align:center;top:379.04px;font-size:12px;color:#222;"><span style="transform:scaleX(1.0781)">0</span></div>
<div class="t" style="left:677.50px;width:600px;text-align:center;top:379.04px;font-size:12px;color:#222;"><span style="transform:scaleX(1.0781)">0</span></div>
<div class="t" style="left:751.00px;width:600px;text-align:center;top:379.04px;font-size:12px;color:#222;"><span style="transform:scaleX(1.0781)">2</span></div>
<div class="t" style="left:811.50px;width:600px;text-align:center;top:379.04px;font-size:12px;color:#222;"><span style="transform:scaleX(1.0781)">0</span></div>
<div class="t" style="left:858.00px;width:600px;text-align:center;top:379.04px;font-size:12px;color:#222;"><span style="transform:scaleX(1.0781)">0</span></div>
<div class="t" style="left:913.00px;width:600px;text-align:center;top:379.04px;font-size:12px;color:#222;"><span style="transform:scaleX(1.0551)">Never</span></div>
<div class="t" style="left:-233.50px;width:600px;text-align:center;top:395.04px;font-size:12px;color:#222;"><span style="transform:scaleX(1.0781)">1</span></div>
<div class="t" style="left:-78.00px;width:600px;text-align:center;top:395.04px;font-size:12px;color:#222;"><span style="transform:scaleX(1.1106)">stratum+tcp://stratum-ltc.antpool.com:443</span></div>
<div class="t" style="left:93.50px;width:600px;text-align:center;top:395.04px;font-size:12px;color:#222;"><span style="transform:scaleX(1.0732)">antminer_1</span></div>
<div class="t" style="left:154.50px;width:600px;text-align:center;top:395.04px;font-size:12px;color:#222;"><span style="transform:scaleX(1.0659)">Alive</span></div>
<div class="t" style="left:255.50px;width:600px;text-align:center;top:395.04px;font-size:12px;color:#222;"><span style="transform:scaleX(1.0781)">2</span></div>
<div class="t" style="left:323.50px;width:600px;text-align:center;top:395.04px;font-size:12px;color:#222;"><span style="transform:scaleX(1.0781)">1</span></div>
<div class="t" style="left:390.00px;width:600px;text-align:center;top:395.04px;font-size:12px;color:#222;"><span style="transform:scaleX(1.0781)">0</span></div>
<div class="t" style="left:456.50px;width:600px;text-align:center;top:395.04px;font-size:12px;color:#222;"><span style="transform:scaleX(1.0781)">0</span></div>
<div class="t" style="left:513.50px;width:600px;text-align:center;top:395.04px;font-size:12px;color:#222;"><span style="transform:scaleX(1.0781)">0</span></div>
<div class="t" style="left:565.50px;width:600px;text-align:center;top:395.04px;font-size:12px;color:#222;"><span style="transform:scaleX(1.0781)">0</span></div>
<div class="t" style="left:617.00px;width:600px;text-align:center;top:395.04px;font-size:12px;color:#222;"><span style="transform:scaleX(1.0781)">0</span></div>
<div class="t" style="left:677.50px;width:600px;text-align:center;top:395.04px;font-size:12px;color:#222;"><span style="transform:scaleX(1.0781)">0</span></div>
<div class="t" style="left:751.00px;width:600px;text-align:center;top:395.04px;font-size:12px;color:#222;"><span style="transform:scaleX(1.0781)">0</span></div>
<div class="t" style="left:811.50px;width:600px;text-align:center;top:395.04px;font-size:12px;color:#222;"><span style="transform:scaleX(1.0781)">0</span></div>
<div class="t" style="left:858.00px;width:600px;text-align:center;top:395.04px;font-size:12px;color:#222;"><span style="transform:scaleX(1.0781)">0</span></div>
<div class="t" style="left:913.00px;width:600px;text-align:center;top:395.04px;font-size:12px;color:#222;"><span style="transform:scaleX(1.0551)">Never</span></div>
<div class="t" style="left:-233.50px;width:600px;text-align:center;top:411.04px;font-size:12px;color:#222;"><span style="transform:scaleX(1.0781)">2</span></div>
<div class="t" style="left:-78.00px;width:600px;text-align:center;top:411.04px;font-size:12px;color:#222;"><span style="transform:scaleX(1.1091)">stratum+tcp://stratum.f2pool.com:8888</span></div>
<div class="t" style="left:93.50px;width:600px;text-align:center;top:411.04px;font-size:12px;color:#222;"><span style="transform:scaleX(1.0939)">ant.123</span></div>
<div class="t" style="left:154.50px;width:600px;text-align:center;top:411.04px;font-size:12px;color:#222;"><span style="transform:scaleX(1.0659)">Alive</span></div>
<div class="t" style="left:199.00px;width:600px;text-align:center;top:411.04px;font-size:12px;color:#222;"><span style="transform:scaleX(1.0418)">8.19K</span></div>
<div class="t" style="left:255.50px;width:600px;text-align:center;top:411.04px;font-size:12px;color:#222;"><span style="transform:scaleX(1.0781)">1</span></div>
<div class="t" style="left:323.50px;width:600px;text-align:center;top:411.04px;font-size:12px;color:#222;"><span style="transform:scaleX(1.0781)">2</span></div>
<div class="t" style="left:390.00px;width:600px;text-align:center;top:411.04px;font-size:12px;color:#222;"><span style="transform:scaleX(1.0781)">0</span></div>
<div class="t" style="left:456.50px;width:600px;text-align:center;top:411.04px;font-size:12px;color:#222;"><span style="transform:scaleX(1.0781)">0</span></div>
<div class="t" style="left:513.50px;width:600px;text-align:center;top:411.04px;font-size:12px;color:#222;"><span style="transform:scaleX(1.0781)">0</span></div>
<div class="t" style="left:565.50px;width:600px;text-align:center;top:411.04px;font-size:12px;color:#222;"><span style="transform:scaleX(1.0781)">0</span></div>
<div class="t" style="left:617.00px;width:600px;text-align:center;top:411.04px;font-size:12px;color:#222;"><span style="transform:scaleX(1.0781)">0</span></div>
<div class="t" style="left:677.50px;width:600px;text-align:center;top:411.04px;font-size:12px;color:#222;"><span style="transform:scaleX(1.0781)">0</span></div>
<div class="t" style="left:751.00px;width:600px;text-align:center;top:411.04px;font-size:12px;color:#222;"><span style="transform:scaleX(1.0781)">0</span></div>
<div class="t" style="left:811.50px;width:600px;text-align:center;top:411.04px;font-size:12px;color:#222;"><span style="transform:scaleX(1.0781)">0</span></div>
<div class="t" style="left:858.00px;width:600px;text-align:center;top:411.04px;font-size:12px;color:#222;"><span style="transform:scaleX(1.0781)">0</span></div>
<div class="t" style="left:913.00px;width:600px;text-align:center;top:411.04px;font-size:12px;color:#222;"><span style="transform:scaleX(1.0551)">Never</span></div>
<div class="t" style="left:-233.50px;width:600px;text-align:center;top:427.04px;font-size:12px;color:#222;"><span style="transform:scaleX(1.1421)">total</span></div>
<div class="t" style="left:255.50px;width:600px;text-align:center;top:427.04px;font-size:12px;color:#222;"><span style="transform:scaleX(1.0781)">5</span></div>
<div class="t" style="left:390.00px;width:600px;text-align:center;top:427.04px;font-size:12px;color:#222;"><span style="transform:scaleX(1.0781)">0</span></div>
<div class="t" style="left:456.50px;width:600px;text-align:center;top:427.04px;font-size:12px;color:#222;"><span style="transform:scaleX(1.0781)">0</span></div>
<div class="t" style="left:513.50px;width:600px;text-align:center;top:427.04px;font-size:12px;color:#222;"><span style="transform:scaleX(1.0781)">0</span></div>
<div class="t" style="left:565.50px;width:600px;text-align:center;top:427.04px;font-size:12px;color:#222;"><span style="transform:scaleX(1.0781)">0</span></div>
<div class="t" style="left:617.00px;width:600px;text-align:center;top:427.04px;font-size:12px;color:#222;"><span style="transform:scaleX(1.0781)">0</span></div>
<div class="t" style="left:677.50px;width:600px;text-align:center;top:427.04px;font-size:12px;color:#222;"><span style="transform:scaleX(1.0781)">0</span></div>
<div class="t" style="left:751.00px;width:600px;text-align:center;top:427.04px;font-size:12px;color:#222;"><span style="transform:scaleX(1.0781)">2</span></div>
<div class="t" style="left:811.50px;width:600px;text-align:center;top:427.04px;font-size:12px;color:#222;"><span style="transform:scaleX(1.0781)">0</span></div>
<div class="t" style="left:-233.50px;width:600px;text-align:center;top:443.04px;font-size:12px;color:#222;"><span style="transform:scaleX(0.9865)">HW</span></div>
<div class="t" style="left:-78.00px;width:600px;text-align:center;top:443.04px;font-size:12px;color:#222;"><span style="transform:scaleX(1.0781)">0</span></div>
<div class="t" style="left:456.50px;width:600px;text-align:center;top:443.04px;font-size:12px;color:#222;"><span style="transform:scaleX(1.0781)">0</span></div>
<div class="t" style="left:513.50px;width:600px;text-align:center;top:443.04px;font-size:12px;color:#222;"><span style="transform:scaleX(1.0781)">0</span></div>
<div class="t" style="left:-221.00px;width:600px;text-align:center;top:504.24px;font-size:12px;color:#111;font-weight:700;"><span style="transform:scaleX(1.1366)">Chain#</span></div>
<div class="t" style="left:-160.50px;width:600px;text-align:center;top:504.24px;font-size:12px;color:#111;font-weight:700;"><span style="transform:scaleX(1.0620)">AS<i class="sI">I</i>C#</span></div>
<div class="t" style="left:-85.00px;width:600px;text-align:center;top:504.24px;font-size:12px;color:#111;font-weight:700;"><span style="transform:scaleX(1.0929)">Frequency</span></div>
<div class="t" style="left:5.00px;width:600px;text-align:center;top:504.24px;font-size:12px;color:#111;font-weight:700;"><span style="transform:scaleX(1.0994)">MH/S(RT)</span></div>
<div class="t" style="left:65.00px;width:600px;text-align:center;top:504.24px;font-size:12px;color:#111;font-weight:700;"><span style="transform:scaleX(1.0992)">HW</span></div>
<div class="t" style="left:130.50px;width:600px;text-align:center;top:504.24px;font-size:12px;color:#111;font-weight:700;"><span style="transform:scaleX(1.0774)">Temp(PCB)</span></div>
<div class="t" style="left:230.00px;width:600px;text-align:center;top:504.24px;font-size:12px;color:#111;font-weight:700;"><span style="transform:scaleX(1.1034)">Temp(Chip)</span></div>
<div class="t" style="left:612.00px;width:600px;text-align:center;top:504.24px;font-size:12px;color:#111;font-weight:700;"><span style="transform:scaleX(1.0691)">AS<i class="sI">I</i>C status</span></div>
<div class="t" style="left:-221.00px;width:600px;text-align:center;top:531.34px;font-size:12px;color:#222;"><span style="transform:scaleX(1.0781)">1</span></div>
<div class="t" style="left:-160.50px;width:600px;text-align:center;top:531.34px;font-size:12px;color:#222;"><span style="transform:scaleX(1.0794)">72</span></div>
<div class="t" style="left:-85.00px;width:600px;text-align:center;top:531.34px;font-size:12px;color:#222;"><span style="transform:scaleX(1.0798)">384</span></div>
<div class="t" style="left:65.00px;width:600px;text-align:center;top:531.34px;font-size:12px;color:#222;"><span style="transform:scaleX(1.0781)">0</span></div>
<div class="t" style="left:130.50px;width:600px;text-align:center;top:531.34px;font-size:12px;color:#222;"><span style="transform:scaleX(1.0282)"><i class="sI">I</i>:0 O:0</span></div>
<div class="t" style="left:230.00px;width:600px;text-align:center;top:531.34px;font-size:12px;color:#222;"><span style="transform:scaleX(1.0282)"><i class="sI">I</i>:0 O:0</span></div>
<div class="t" style="left:612.00px;width:600px;text-align:center;top:531.34px;font-size:12px;color:#222;"><span style="transform:scaleX(1.0647)">oooooooo oooooooo oooooooo oooooooo oooooooo oooooooo oooooooo oooooooo oooooooo</span></div>
<div class="t" style="left:-221.00px;width:600px;text-align:center;top:547.34px;font-size:12px;color:#222;"><span style="transform:scaleX(1.0781)">2</span></div>
<div class="t" style="left:-160.50px;width:600px;text-align:center;top:547.34px;font-size:12px;color:#222;"><span style="transform:scaleX(1.0794)">72</span></div>
<div class="t" style="left:-85.00px;width:600px;text-align:center;top:547.34px;font-size:12px;color:#222;"><span style="transform:scaleX(1.0798)">384</span></div>
<div class="t" style="left:5.00px;width:600px;text-align:center;top:547.34px;font-size:12px;color:#222;"><span style="transform:scaleX(1.0804)">0.0000</span></div>
<div class="t" style="left:65.00px;width:600px;text-align:center;top:547.34px;font-size:12px;color:#222;"><span style="transform:scaleX(1.0781)">0</span></div>
<div class="t" style="left:130.50px;width:600px;text-align:center;top:547.34px;font-size:12px;color:#222;"><span style="transform:scaleX(1.0282)"><i class="sI">I</i>:0 O:0</span></div>
<div class="t" style="left:230.00px;width:600px;text-align:center;top:547.34px;font-size:12px;color:#222;"><span style="transform:scaleX(1.0282)"><i class="sI">I</i>:0 O:0</span></div>
<div class="t" style="left:612.00px;width:600px;text-align:center;top:547.34px;font-size:12px;color:#222;"><span style="transform:scaleX(1.0647)">oooooooo oooooooo oooooooo oooooooo oooooooo oooooooo oooooooo oooooooo oooooooo</span></div>
<div class="t" style="left:-221.00px;width:600px;text-align:center;top:563.34px;font-size:12px;color:#222;"><span style="transform:scaleX(1.0781)">3</span></div>
<div class="t" style="left:-160.50px;width:600px;text-align:center;top:563.34px;font-size:12px;color:#222;"><span style="transform:scaleX(1.0794)">72</span></div>
<div class="t" style="left:-85.00px;width:600px;text-align:center;top:563.34px;font-size:12px;color:#222;"><span style="transform:scaleX(1.0798)">384</span></div>
<div class="t" style="left:5.00px;width:600px;text-align:center;top:563.34px;font-size:12px;color:#222;"><span style="transform:scaleX(1.0804)">0.0000</span></div>
<div class="t" style="left:65.00px;width:600px;text-align:center;top:563.34px;font-size:12px;color:#222;"><span style="transform:scaleX(1.0781)">0</span></div>
<div class="t" style="left:130.50px;width:600px;text-align:center;top:563.34px;font-size:12px;color:#222;"><span style="transform:scaleX(1.0282)"><i class="sI">I</i>:0 O:0</span></div>
<div class="t" style="left:230.00px;width:600px;text-align:center;top:563.34px;font-size:12px;color:#222;"><span style="transform:scaleX(1.0282)"><i class="sI">I</i>:0 O:0</span></div>
<div class="t" style="left:612.00px;width:600px;text-align:center;top:563.34px;font-size:12px;color:#222;"><span style="transform:scaleX(1.0647)">oooooooo oooooooo oooooooo oooooooo oooooooo oooooooo oooooooo oooooooo oooooooo</span></div>
<div class="t" style="left:-221.00px;width:600px;text-align:center;top:579.34px;font-size:12px;color:#222;"><span style="transform:scaleX(1.0781)">4</span></div>
<div class="t" style="left:-160.50px;width:600px;text-align:center;top:579.34px;font-size:12px;color:#222;"><span style="transform:scaleX(1.0794)">72</span></div>
<div class="t" style="left:-85.00px;width:600px;text-align:center;top:579.34px;font-size:12px;color:#222;"><span style="transform:scaleX(1.0798)">384</span></div>
<div class="t" style="left:65.00px;width:600px;text-align:center;top:579.34px;font-size:12px;color:#222;"><span style="transform:scaleX(1.0781)">0</span></div>
<div class="t" style="left:130.50px;width:600px;text-align:center;top:579.34px;font-size:12px;color:#222;"><span style="transform:scaleX(1.0282)"><i class="sI">I</i>:0 O:0</span></div>
<div class="t" style="left:230.00px;width:600px;text-align:center;top:579.34px;font-size:12px;color:#222;"><span style="transform:scaleX(1.0282)"><i class="sI">I</i>:0 O:0</span></div>
<div class="t" style="left:612.00px;width:600px;text-align:center;top:579.34px;font-size:12px;color:#222;"><span style="transform:scaleX(1.0647)">oooooooo oooooooo oooooooo oooooooo oooooooo oooooooo oooooooo oooooooo oooooooo</span></div>
<div class="t" style="left:-193.50px;width:600px;text-align:center;top:610.64px;font-size:12px;color:#111;font-weight:700;"><span style="transform:scaleX(1.1524)">Fan#</span></div>
<div class="t" style="left:131.50px;width:600px;text-align:center;top:610.64px;font-size:12px;color:#111;font-weight:700;"><span style="transform:scaleX(1.0949)">Fan1</span></div>
<div class="t" style="left:664.00px;width:600px;text-align:center;top:610.64px;font-size:12px;color:#111;font-weight:700;"><span style="transform:scaleX(1.0949)">Fan2</span></div>
<div class="t" style="left:-193.25px;width:600px;text-align:center;top:630.44px;font-size:12px;color:#111;font-weight:700;"><span style="transform:scaleX(1.2179)">Speed (r/min)</span></div>
<div class="t" style="left:132.00px;width:600px;text-align:center;top:630.94px;font-size:12px;color:#222;"><span style="transform:scaleX(1.0804)">4,100</span></div>
<div class="t" style="left:664.00px;width:600px;text-align:center;top:630.94px;font-size:12px;color:#222;"><span style="transform:scaleX(1.0804)">4,100</span></div>
<div class="t" style="left:48.80px;top:232.54px;font-size:12.3px;color:#5c5c5c;font-weight:700;"><span style="transform:scaleX(1.2418);transform-origin:0 50%">Summary</span></div>
<div class="t" style="left:48.80px;top:320.54px;font-size:12.3px;color:#5c5c5c;font-weight:700;"><span style="transform:scaleX(1.1468);transform-origin:0 50%">Pools</span></div>
<div class="t" style="left:49.40px;top:473.24px;font-size:12.3px;color:#5c5c5c;font-weight:700;"><span style="transform:scaleX(1.2008);transform-origin:0 50%">AntMiner</span></div>
<div class="t" style="left:32.00px;top:194.81px;font-size:17px;color:#000;font-weight:700;"><span style="transform:scaleX(1.0271);transform-origin:0 50%">Miner Status</span></div>
<div class="t" style="left:42.60px;top:157.64px;font-size:12px;color:#6a6a6a;"><span style="transform:scaleX(1.0646);transform-origin:0 50%">System</span></div>
<div class="t" style="left:108.70px;top:157.64px;font-size:12px;color:#6a6a6a;"><span style="transform:scaleX(1.0695);transform-origin:0 50%">Miner Configuration</span></div>
<div class="t" style="left:243.50px;top:157.64px;font-size:12px;color:#000;font-weight:700;"><span style="transform:scaleX(1.1150);transform-origin:0 50%">Miner Status</span></div>
<div class="t" style="left:347.30px;top:157.64px;font-size:12px;color:#6a6a6a;"><span style="transform:scaleX(1.0474);transform-origin:0 50%">Network</span></div>
<div class="t" style="left:507.90px;top:686.24px;font-size:12px;color:#eee;"><span style="transform:scaleX(1.1937);transform-origin:0 50%">Copyright © 2013-2014, Bitmain Technologies</span></div>
<div class="t" style="left:28.50px;top:62.05px;font-size:14px;color:#333;"><span style="transform:scaleX(1.0286);transform-origin:0 50%">ВКонтакте</span></div>
<div class="t" style="left:132.40px;top:62.05px;font-size:14px;color:#333;"><span style="transform:scaleX(0.9885);transform-origin:0 50%">СПОРТ.UA</span></div>
<div class="t" style="left:235.00px;top:62.05px;font-size:14px;color:#333;"><span style="transform:scaleX(0.9282);transform-origin:0 50%">EX.UA</span></div>
<div class="t" style="left:308.30px;top:62.05px;font-size:14px;color:#333;"><span style="transform:scaleX(0.9811);transform-origin:0 50%">RuTracker</span></div>
<div class="t" style="left:406.00px;top:62.05px;font-size:14px;color:#333;"><span style="transform:scaleX(0.9745);transform-origin:0 50%">New</span></div>
<div class="t" style="left:466.40px;top:62.05px;font-size:14px;color:#333;"><span style="transform:scaleX(0.9394);transform-origin:0 50%">LostFilm</span></div>
<div class="t" style="left:550.20px;top:62.05px;font-size:14px;color:#333;"><span style="transform:scaleX(0.9488);transform-origin:0 50%">NNM-Club</span></div>
<div class="t" style="left:645.20px;top:62.05px;font-size:14px;color:#333;"><span style="transform:scaleX(1.0286);transform-origin:0 50%">You</span></div>
<div class="t" style="left:703.00px;top:62.05px;font-size:14px;color:#333;"><span style="transform:scaleX(1.0093);transform-origin:0 50%">Приват24</span></div>
<div class="t" style="left:800.00px;top:62.05px;font-size:14px;color:#333;"><span style="transform:scaleX(0.9844);transform-origin:0 50%">MyFootball</span></div>
<div class="t" style="left:901.40px;top:62.05px;font-size:14px;color:#333;"><span style="transform:scaleX(0.9546);transform-origin:0 50%">Soccer365</span></div>
<div class="t" style="left:999.00px;top:62.05px;font-size:14px;color:#333;"><span style="transform:scaleX(0.9955);transform-origin:0 50%">solomiya</span></div>
<div class="t" style="left:1170.50px;top:62.05px;font-size:14px;color:#333;"><span style="transform:scaleX(1.0505);transform-origin:0 50%">Другие закладки</span></div>
<div class="t" style="left:151.60px;top:34.33px;font-size:15.8px;color:#333;"><span style="transform:scaleX(0.9918);transform-origin:0 50%">192.168.1.245</span></div>
<div class="t" style="left:251.80px;top:34.33px;font-size:15.8px;color:#8a8a8a;"><span style="transform:scaleX(1.0147);transform-origin:0 50%">/cgi-bin/minerStatus.cgi</span></div>
<div class="t" style="left:714.00px;top:4.10px;font-size:13px;color:#555;-webkit-mask-image:linear-gradient(to right,#000 0,#000 32px,transparent 47px);mask-image:linear-gradient(to right,#000 0,#000 32px,transparent 47px);"><span style="transform:scaleX(1.0900);transform-origin:0 50%">MikroTik</span></div>
<div class="t" style="left:815.40px;top:4.10px;font-size:13px;color:#444;-webkit-mask-image:linear-gradient(to right,#000 0,#000 33px,transparent 48px);mask-image:linear-gradient(to right,#000 0,#000 33px,transparent 48px);"><span style="transform:scaleX(1.1331);transform-origin:0 50%">Ваши в</span></div>
<div class="t" style="left:917.70px;top:4.10px;font-size:13px;color:#555;-webkit-mask-image:linear-gradient(to right,#000 0,#000 30px,transparent 45px);mask-image:linear-gradient(to right,#000 0,#000 30px,transparent 45px);"><span style="transform:scaleX(1.0175);transform-origin:0 50%">3HA4Na</span></div>
<div class="t" style="left:1019.00px;top:4.10px;font-size:13px;color:#555;-webkit-mask-image:linear-gradient(to right,#000 0,#000 32px,transparent 48px);mask-image:linear-gradient(to right,#000 0,#000 32px,transparent 48px);"><span style="transform:scaleX(1.1216);transform-origin:0 50%">My Acc</span></div>
<div class="t" style="left:1151.50px;top:0.62px;font-size:11.5px;color:#e6e6e6;font-weight:700;text-shadow:0 0 1px #333;"><span style="transform:scaleX(1.0680);transform-origin:0 50%">Юра</span></div>
<!-- cursor -->
<svg class="a" style="left:370px;top:485px" width="45" height="60" viewBox="370 485 45 60">
 <path d="M379.5 494.5 L379.5 527.5 L387.5 519.5 L395 535.5 L400.5 533.5 L393.5 517.5 L403 517.5 Z" fill="#fff" stroke="#000" stroke-width="1.2" stroke-linejoin="miter"/>
</svg>
<!-- keyboard button -->
<svg class="a" style="left:1040px;top:675px" width="160" height="75" viewBox="1040 675 160 75">
 <circle cx="1120" cy="754" r="70.5" fill="#4b4158" stroke="#fff" stroke-width="2.6"/>
 <path d="M1107 704.5 L1120.2 697 L1133.5 704.5" stroke="#fff" stroke-width="1.3" fill="none"/>
 <rect x="1079.5" y="709" width="82" height="37.5" fill="#fff"/>
 <g fill="#4b4158">
  <rect x="1084" y="714" width="6.5" height="6"/><rect x="1094.5" y="714" width="6.5" height="6"/><rect x="1105" y="714" width="6.5" height="6"/><rect x="1115.7" y="714" width="6.5" height="6"/><rect x="1126.3" y="714" width="6.5" height="6"/><rect x="1137" y="714" width="6.5" height="6"/><rect x="1147.5" y="714" width="6.5" height="6"/>
  <rect x="1084" y="724" width="6.5" height="6"/><rect x="1094.5" y="724" width="6.5" height="6"/><rect x="1105" y="724" width="6.5" height="6"/><rect x="1115.7" y="724" width="6.5" height="6"/><rect x="1126.3" y="724" width="6.5" height="6"/><rect x="1137" y="724" width="6.5" height="6"/><rect x="1147.5" y="724" width="6.5" height="6"/>
  <rect x="1084" y="734" width="6.5" height="6"/><rect x="1095.5" y="734" width="49" height="6"/><rect x="1147.5" y="734" width="6.5" height="6"/>
 </g>
</svg>
</body></html>
